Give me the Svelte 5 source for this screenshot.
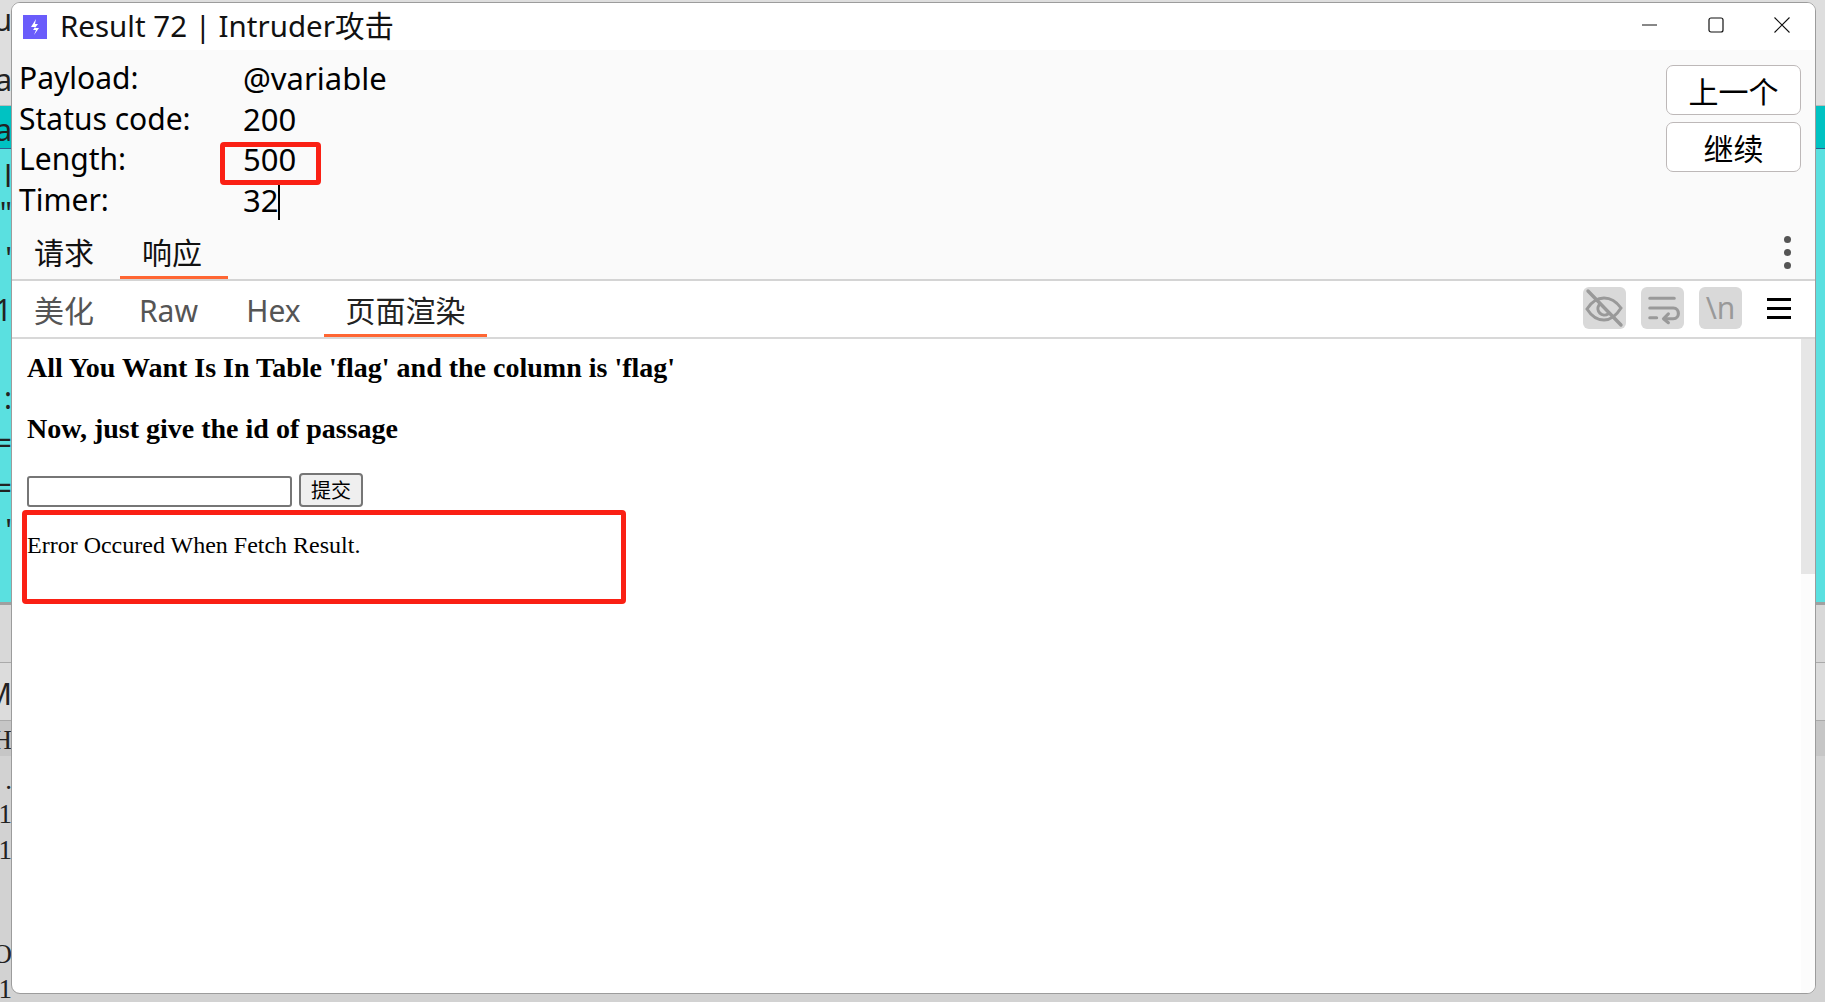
<script lang="ts">
  // Burp "Result 72" popup on top of a cropped slice of the windows behind it.
  const info = [
    ['Payload:', '@variable'],
    ['Status code:', '200'],
    ['Length:', '500'],
    ['Timer:', '32'],
  ];
  const subTabs = [
    { label: '美化', x: 'a' },
    { label: 'Raw', x: 'b' },
    { label: 'Hex', x: 'c' },
    { label: '页面渲染', x: 'd' },
  ];
  // characters of the hidden window that stick out on the left edge
  const peek = [
    { t: 'u', y: 2, mono: false },
    { t: 'a', y: 62, mono: false },
    { t: 'a', y: 112, mono: false },
    { t: 'l', y: 158, mono: false },
    { t: '"', y: 195, mono: false },
    { t: "'", y: 240, mono: false },
    { t: '1', y: 292, mono: false },
    { t: ':', y: 380, mono: false },
    { t: '=', y: 425, mono: false },
    { t: '=', y: 470, mono: false },
    { t: "'", y: 512, mono: false },
    { t: 'M', y: 676, mono: false },
    { t: 'H', y: 722, mono: true },
    { t: '.', y: 762, mono: true },
    { t: '1', y: 796, mono: true },
    { t: '1', y: 832, mono: true },
    { t: 'O', y: 936, mono: true },
    { t: '1', y: 971, mono: true },
  ];
</script>

<div class="desk">
  <div class="back">
    <div class="band top"></div>
    <div class="band teal"></div>
    <div class="band aqua"></div>
    <div class="band g1"></div>
    <div class="band g2"></div>
    <div class="band g3"></div>
    <div class="band g4"></div>
  </div>
  {#each peek as p}
    <span class="peek" class:mono={p.mono} style={`top:${p.y}px`}>{p.t}</span>
  {/each}

  <div class="win">
    <header class="title">
      <svg class="logo" viewBox="0 0 24 24" width="24" height="24">
        <rect width="24" height="24" fill="#6a5cfb" />
        <path d="M13 4 8 12h4l-2 3 3 0-2 5 5-7h-4l3-4h-3z" fill="#fff" />
      </svg>
      <span class="title-text">Result 72 | Intruder攻击</span>
      <div class="controls">
        <svg viewBox="0 0 16 16" width="16" height="16"><path d="M0 8h15" stroke="#111" stroke-width="1" /></svg>
        <svg viewBox="0 0 16 16" width="16" height="16"><rect x="1" y="1" width="14" height="14" rx="2" fill="none" stroke="#111" stroke-width="1.2" /></svg>
        <svg viewBox="0 0 16 16" width="16" height="16"><path d="M.5.5l15 15M15.500 .5l-15 15" stroke="#111" stroke-width="1.100" /></svg>
      </div>
    </header>

    <section class="info">
      <div class="fields">
        {#each info as row, i}
          <div class="field">
            <span class="k">{row[0]}</span>
            <span class="v" class:caret={i === 3}>{row[1]}</span>
          </div>
        {/each}
      </div>
      <div class="btns">
        <button type="button">上一个</button>
        <button type="button">继续</button>
      </div>
    </section>

    <nav class="tabs">
      <span class="tab">请求</span>
      <span class="tab on">响应</span>
      <span class="more"><i></i><i></i><i></i></span>
    </nav>

    <nav class="subtabs">
      {#each subTabs as s, i}
        <span class="sub {s.x}" class:on={i === 3}>{s.label}</span>
      {/each}
      <div class="tools">
        <span class="tool">
          <svg viewBox="0 0 43 42" width="43" height="42" fill="none" stroke="#999" stroke-width="3" stroke-linecap="round">
            <path d="M4 22c5-8 11-11 17-11s12 3 17 10c-5 8-11 12-17 12S9 30 4 22z" />
            <path d="M16 18a6.500 6.500 0 0 0 9 9" />
            <path d="M5 4l33 34" stroke-width="3.400" />
          </svg>
        </span>
        <span class="tool">
          <svg viewBox="0 0 44 42" width="44" height="42" fill="none" stroke="#999" stroke-width="3.200" stroke-linecap="round" stroke-linejoin="round">
            <path d="M9 11h25M9 21h24c7 0 7 11 0 11h-9" />
            <path d="M9 31h7M28 27l-5 5 5 4" />
          </svg>
        </span>
        <span class="tool nl">\n</span>
        <span class="burger"><i></i><i></i><i></i></span>
      </div>
    </nav>

    <main class="page">
      <div class="doc">
        <h3>All You Want Is In Table 'flag' and the column is 'flag'</h3>
        <h3>Now, just give the id of passage</h3>
        <form class="frm">
          <input type="text" />
          <button type="button">提交</button>
        </form>
        <p>Error Occured When Fetch Result.</p>
      </div>
      <div class="scroll"><div class="thumb"></div></div>
    </main>
  </div>

  <div class="mark m1"></div>
  <div class="mark m2"></div>
</div>

<style>
  :global(body) {
    margin: 0;
    overflow: hidden;
  }
  .desk {
    position: relative;
    width: 1825px;
    height: 1002px;
    overflow: hidden;
    background: #c9c9c9;
    font-family: 'Noto Sans', 'Noto Sans CJK SC', sans-serif;
  }
  .back {
    position: absolute;
    inset: 0;
    display: flex;
    flex-direction: column;
  }
  .band {
    flex: none;
  }
  .top {
    height: 105px;
    background: #dedede;
    border-bottom: 1px solid #bbb;
  }
  .teal {
    height: 42px;
    background: #00c2c2;
    border-bottom: 1px solid #2d5c8c;
  }
  .aqua {
    height: 453px;
    background: #5ae0e0;
    border-bottom: 3px solid #a0a0a0;
  }
  .g1 {
    height: 57px;
    background: #d8d8d8;
    border-bottom: 1px solid #aaa;
  }
  .g2 {
    height: 57px;
    background: #dcdcdc;
    border-bottom: 1px solid #aaa;
  }
  .g3 {
    height: 35px;
    background: #c6c6c6;
  }
  .g4 {
    flex: 1;
    background: #d2d2d2;
  }
  .peek {
    position: absolute;
    right: 1813px;
    font-size: 30px;
    line-height: 36px;
    color: #222;
  }
  .peek.mono {
    font-family: 'Liberation Serif', serif;
    font-size: 27px;
  }
  .win {
    position: absolute;
    left: 11px;
    top: 2px;
    width: 1803px;
    height: 990px;
    display: flex;
    flex-direction: column;
    background: #fff;
    border: 1px solid #9c9c9c;
    border-radius: 9px;
    overflow: hidden;
    color: #000;
  }
  .title {
    flex: none;
    height: 47px;
    display: flex;
    align-items: center;
    background: #fff;
    padding-left: 11px;
  }
  .logo {
    flex: none;
    margin-right: 13px;
  }
  .title-text {
    font-size: 29.500px;
    line-height: 40px;
    color: #111;
    margin-top: -2px;
  }
  .controls {
    margin-left: auto;
    display: flex;
    gap: 50px;
    padding-right: 25px;
    margin-top: -4px;
  }
  .info {
    flex: none;
    height: 185px;
    box-sizing: border-box;
    display: flex;
    justify-content: space-between;
    background: #fafafa;
    padding: 8px 14px 0 7px;
  }
  .fields {
    font-size: 31px;
    line-height: 40.500px;
  }
  .field {
    display: grid;
    grid-template-columns: 224px auto;
  }
  .k {
    font-size: 30px;
  }
  .v.caret {
    border-right: 2px solid #000;
    justify-self: start;
  }
  .btns {
    display: flex;
    flex-direction: column;
    gap: 7px;
    padding-top: 7px;
  }
  .btns button {
    width: 135px;
    height: 50px;
    border: 1px solid #bdb8b8;
    border-radius: 7px;
    background: #fff;
    font: 30px/1 'Noto Sans CJK SC', sans-serif;
    color: #000;
    padding: 0;
  }
  .tabs {
    flex: none;
    height: 46px;
    display: flex;
    align-items: flex-end;
    background: #fafafa;
    border-bottom: 2px solid #d4d4d4;
    box-sizing: border-box;
    position: relative;
  }
  .tab {
    box-sizing: border-box;
    width: 108px;
    height: 46px;
    padding-right: 4px;
    text-align: center;
    font: 30px/36px 'Noto Sans CJK SC', sans-serif;
    color: #111;
    border-bottom: 3px solid transparent;
  }
  .tab.on {
    border-bottom-color: #ff6633;
  }
  .more {
    position: absolute;
    right: 24px;
    top: 1px;
    display: flex;
    flex-direction: column;
    gap: 6px;
  }
  .more i {
    width: 7px;
    height: 7px;
    border-radius: 50%;
    background: #555;
  }
  .subtabs {
    flex: none;
    height: 58px;
    box-sizing: border-box;
    display: flex;
    align-items: flex-end;
    border-bottom: 2px solid #d8d8d8;
    font-size: 30px;
    color: #555;
  }
  .sub {
    box-sizing: border-box;
    height: 52px;
    line-height: 52px;
    text-align: center;
    border-bottom: 3px solid transparent;
  }
  .sub.a {
    width: 104px;
  }
  .sub.b {
    width: 105px;
  }
  .sub.c {
    width: 103px;
    padding-left: 2px;
  }
  .sub.d {
    width: 163px;
    color: #222;
    border-bottom-color: #ff6633;
  }
  .tools {
    margin-left: auto;
    align-self: center;
    display: flex;
    align-items: center;
    gap: 15px;
    padding-right: 24px;
    margin-top: -2px;
  }
  .tool {
    width: 43px;
    height: 42px;
    border-radius: 6px;
    background: #d9d9d9;
    display: flex;
    align-items: center;
    justify-content: center;
  }
  .nl {
    color: #999;
    font-size: 30px;
    line-height: 36px;
  }
  .burger {
    margin-left: 10px;
    width: 24px;
    display: flex;
    flex-direction: column;
    gap: 6px;
  }
  .burger i {
    height: 3px;
    background: #000;
  }
  .page {
    flex: 1;
    min-height: 0;
    display: flex;
  }
  .doc {
    flex: 1;
    padding: 14px 15px;
    font-family: 'Liberation Serif', 'Noto Sans CJK SC', serif;
    color: #000;
  }
  h3 {
    margin: 0 0 32px;
    font-size: 28px;
    line-height: 29px;
    font-weight: 700;
  }
  .frm {
    display: flex;
    align-items: flex-end;
    gap: 7px;
    margin-top: -2px;
  }
  .frm input {
    box-sizing: border-box;
    width: 265px;
    height: 31px;
    border: 2px solid #767676;
    border-radius: 3px;
    background: #fff;
    padding: 0;
  }
  .frm button {
    box-sizing: border-box;
    width: 64px;
    height: 34px;
    border: 2px solid #767676;
    border-radius: 4px;
    background: #efefef;
    font: 20px/1 'Noto Sans CJK SC', serif;
    color: #000;
    padding: 0;
  }
  p {
    margin: 25px 0 0;
    font-size: 24px;
    line-height: 26px;
  }
  .scroll {
    flex: none;
    width: 14px;
    background: #fcfcfc;
  }
  .thumb {
    height: 235px;
    background: #e6e6e6;
  }
  .mark {
    position: absolute;
    box-sizing: border-box;
    border: 5px solid #fa2014;
    border-radius: 4px;
  }
  .m1 {
    left: 220px;
    top: 142px;
    width: 101px;
    height: 43px;
  }
  .m2 {
    left: 22px;
    top: 510px;
    width: 604px;
    height: 94px;
  }
</style>
